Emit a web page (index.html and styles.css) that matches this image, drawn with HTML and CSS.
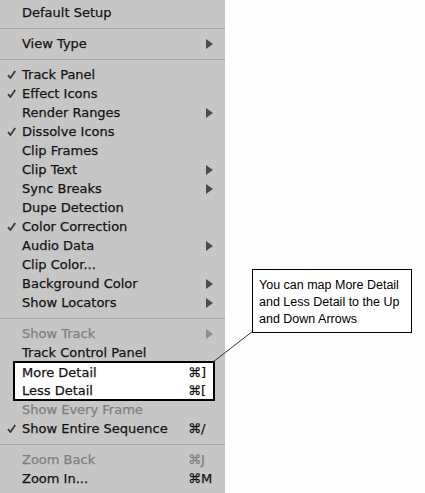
FILE: index.html
```html
<!DOCTYPE html>
<html>
<head>
    <title>View Menu</title>
    <link rel="stylesheet" href="styles.css">
</head>
<body>

<div class="menu">
    <div class="item"><span></span><span>Default Setup</span></div>
    <div class="sep"></div>
    <div class="item"><span></span><span>View Type</span><span class="arrow"><svg width="7" height="10"><polygon points="0,0 7,5 0,10"/></svg></span></div>
    <div class="sep"></div>
    <div class="item"><span class="check"><svg width="9" height="9" viewBox="0 0 9 9"><path d="M1 5.2 L3.4 8 L8.2 1"/></svg></span><span>Track Panel</span></div>
    <div class="item"><span class="check"><svg width="9" height="9" viewBox="0 0 9 9"><path d="M1 5.2 L3.4 8 L8.2 1"/></svg></span><span>Effect Icons</span></div>
    <div class="item"><span></span><span>Render Ranges</span><span class="arrow"><svg width="7" height="10"><polygon points="0,0 7,5 0,10"/></svg></span></div>
    <div class="item"><span class="check"><svg width="9" height="9" viewBox="0 0 9 9"><path d="M1 5.2 L3.4 8 L8.2 1"/></svg></span><span>Dissolve Icons</span></div>
    <div class="item"><span></span><span>Clip Frames</span></div>
    <div class="item"><span></span><span>Clip Text</span><span class="arrow"><svg width="7" height="10"><polygon points="0,0 7,5 0,10"/></svg></span></div>
    <div class="item"><span></span><span>Sync Breaks</span><span class="arrow"><svg width="7" height="10"><polygon points="0,0 7,5 0,10"/></svg></span></div>
    <div class="item"><span></span><span>Dupe Detection</span></div>
    <div class="item"><span class="check"><svg width="9" height="9" viewBox="0 0 9 9"><path d="M1 5.2 L3.4 8 L8.2 1"/></svg></span><span>Color Correction</span></div>
    <div class="item"><span></span><span>Audio Data</span><span class="arrow"><svg width="7" height="10"><polygon points="0,0 7,5 0,10"/></svg></span></div>
    <div class="item"><span></span><span>Clip Color...</span></div>
    <div class="item"><span></span><span>Background Color</span><span class="arrow"><svg width="7" height="10"><polygon points="0,0 7,5 0,10"/></svg></span></div>
    <div class="item"><span></span><span>Show Locators</span><span class="arrow"><svg width="7" height="10"><polygon points="0,0 7,5 0,10"/></svg></span></div>
    <div class="sep"></div>
    <div class="item off"><span></span><span>Show Track</span><span class="arrow"><svg width="7" height="10"><polygon points="0,0 7,5 0,10"/></svg></span></div>
    <div class="item"><span></span><span>Track Control Panel</span></div>
    <div class="boxed">
        <div class="item"><span></span><span>More Detail</span><span class="key">⌘]</span></div>
        <div class="item"><span></span><span>Less Detail</span><span class="key">⌘[</span></div>
    </div>
    <div class="item off"><span></span><span>Show Every Frame</span></div>
    <div class="item"><span class="check"><svg width="9" height="9" viewBox="0 0 9 9"><path d="M1 5.2 L3.4 8 L8.2 1"/></svg></span><span>Show Entire Sequence</span><span class="key">⌘/</span></div>
    <div class="sep"></div>
    <div class="item off"><span></span><span>Zoom Back</span><span class="key">⌘J</span></div>
    <div class="item"><span></span><span>Zoom In...</span><span class="key">⌘M</span></div>
</div>

<svg class="pointer" width="425" height="493"><line x1="213" y1="362" x2="253" y2="331"/></svg>

<div class="callout">You can map More Detail<br>and Less Detail to the Up<br>and Down Arrows</div>

</body>
</html>
```

FILE: styles.css
```css
body {
    margin: 0; background-color: #fdfdfd; height: 493px; overflow: hidden;
}

.menu { height: 493px; padding: 3px 12px 0 0; box-sizing: border-box; width: 225px; background-color: #c6c6c6;
    font-family: "DejaVu Sans", sans-serif; font-size: 13px; color: #141414; -webkit-text-stroke: 0.25px;
}

.item { display: grid; grid-template-columns: 22px 166px 25px; height: 19px; line-height: 19px; white-space: nowrap;
}

.item.off { color: #7e7e7e;
}

.check svg { fill: none; stroke: #3a3a3a; stroke-width: 1.8; margin-left: 7px; vertical-align: baseline;
}

.arrow { justify-self: end;
}

.arrow svg { fill: #4b4b4b; vertical-align: -1px;
}

.item.off .arrow svg { fill: #8e8e8e;
}

.key { justify-self: start;
}

.sep { height: 12px; padding-top: 6px; box-sizing: border-box; margin-right: -12px;
}

.sep::after { content: ""; display: block; height: 1px; background-color: #a8a8a8;
}

.boxed { margin: -1px -2px -1px 13px; border: 2px solid #000; background-color: #fff;
}

.boxed .item { grid-template-columns: 7px 166px 25px; height: 18px;
}

.pointer { position: absolute; left: 0; top: 0; pointer-events: none;
}

.pointer line { stroke: #333; stroke-width: 1;
}

.callout { position: absolute; left: 252px; top: 269px; width: 160px; height: 64px; box-sizing: border-box; padding: 7px 6px;
    border: 1px solid #000; background-color: #fff; font-family: "Liberation Sans", Arial, sans-serif; font-size: 12.5px; line-height: 17px; color: #000;
}
```
